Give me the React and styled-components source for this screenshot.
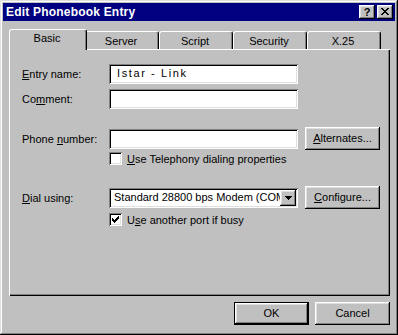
import styled, { createGlobalStyle } from 'styled-components'

const GlobalStyle = createGlobalStyle`
  html, body {
    margin: 0;
    padding: 0;
    background: #c0c0c0;
  }
  * { box-sizing: border-box; }
`

const raised = `
  box-shadow: inset -1px -1px #000, inset 1px 1px #fff, inset -2px -2px #808080, inset 2px 2px #dfdfdf;
`
const sunken = `
  box-shadow: inset 1px 1px #808080, inset -1px -1px #fff, inset 2px 2px #000, inset -2px -2px #dfdfdf;
`

const Window = styled.div`
  width: 398px;
  height: 335px;
  background: #c0c0c0;
  padding: 3px;
  font-family: "Liberation Sans", Arial, sans-serif;
  font-size: 11px;
  color: #000;
  box-shadow: inset -1px -1px #000, inset 1px 1px #dfdfdf, inset -2px -2px #808080, inset 2px 2px #fff;
  display: flex;
  flex-direction: column;
`

const TitleBar = styled.div`
  height: 18px;
  background: #000080;
  display: flex;
  align-items: center;
  padding: 0 2px 0 3px;
`

const Title = styled.div`
  flex: 1;
  color: #fff;
  font-weight: bold;
  font-size: 12px;
  letter-spacing: 0.2px;
`

const CaptionButton = styled.div`
  width: 16px;
  height: 14px;
  background: #c0c0c0;
  ${raised}
  display: flex;
  align-items: center;
  justify-content: center;
  margin-left: ${p => p.$gap || 0}px;
  font-weight: bold;
  font-size: 11px;
  line-height: 14px;
  padding-bottom: 1px;
`

const Body = styled.div`
  padding: 8px 0 0 6px;
`

const TabRow = styled.div`
  display: flex;
  align-items: flex-end;
  height: 20px;
  padding-left: 2px;
`

const Tab = styled.div`
  width: ${p => (p.$active ? 78 : 74)}px;
  height: ${p => (p.$active ? 21 : 18)}px;
  margin: ${p => (p.$active ? '0 -2px -1px -2px' : '0')};
  position: relative;
  z-index: ${p => (p.$active ? 2 : 1)};
  background: #c0c0c0;
  border-top: 1px solid #fff;
  border-left: 1px solid #fff;
  border-right: 1px solid #000;
  border-radius: 3px 3px 0 0;
  box-shadow: inset -1px 0 #808080;
  display: flex;
  justify-content: center;
  padding-top: ${p => (p.$active ? 2 : 3)}px;
  padding-right: 2px;
`

const Panel = styled.div`
  width: 381px;
  height: 247px;
  background: #c0c0c0;
  box-shadow: inset 1px 1px #fff, inset -1px -1px #000, inset -2px -2px #808080;
  padding: 15px 0 0 13px;
  display: flex;
  flex-direction: column;
`

const Row = styled.div`
  display: flex;
  align-items: center;
  height: ${p => p.$h || 20}px;
  margin-top: ${p => p.$mt || 0}px;
`

const Label = styled.div`
  width: 87px;
  flex: none;
`

const Field = styled.div`
  width: 189px;
  height: 20px;
  background: #fff;
  ${sunken}
  padding: 3px 0 0 8px;
  letter-spacing: ${p => p.$wide ? '1.6px' : '0'};
  white-space: nowrap;
  overflow: hidden;
`

const Select = styled.div`
  width: 189px;
  height: 20px;
  background: #fff;
  ${sunken}
  padding: 2px;
  display: flex;
`

const SelectText = styled.div`
  flex: 1;
  padding: 1px 0 0 3px;
  white-space: nowrap;
  overflow: hidden;
`

const DropButton = styled.div`
  width: 16px;
  height: 16px;
  flex: none;
  background: #c0c0c0;
  ${raised}
  display: flex;
  align-items: center;
  justify-content: center;
`

const Button = styled.div`
  width: 75px;
  height: 23px;
  background: #c0c0c0;
  ${p => p.$default
    ? 'border: 1px solid #000; box-shadow: inset -1px -1px #000, inset 1px 1px #fff, inset -2px -2px #808080, inset 2px 2px #dfdfdf;'
    : raised}
  display: flex;
  align-items: center;
  justify-content: center;
  margin-left: ${p => p.$ml || 0}px;
  padding-bottom: 1px;
`

const CheckRow = styled.div`
  display: flex;
  align-items: center;
  padding-left: 87px;
  height: 13px;
  margin-top: ${p => p.$mt || 0}px;
`

const CheckBox = styled.div`
  width: 13px;
  height: 13px;
  background: #fff;
  ${sunken}
  margin-right: 5px;
  padding: 3px;
`

const Footer = styled.div`
  display: flex;
  justify-content: flex-end;
  width: 381px;
  margin-top: 6px;
`

const U = styled.span`
  text-decoration: underline;
  text-underline-offset: 1px;
`

const CheckMark = () => (
  <svg width="7" height="7" viewBox="0 0 7 7" shapeRendering="crispEdges" style={{ display: 'block' }}>
    <rect x="6" y="0" width="1" height="1" />
    <rect x="5" y="1" width="2" height="1" />
    <rect x="0" y="2" width="1" height="1" />
    <rect x="4" y="2" width="3" height="1" />
    <rect x="0" y="3" width="2" height="1" />
    <rect x="3" y="3" width="3" height="1" />
    <rect x="0" y="4" width="5" height="1" />
    <rect x="1" y="5" width="3" height="1" />
    <rect x="2" y="6" width="1" height="1" />
  </svg>
)

const CloseIcon = () => (
  <svg width="8" height="7" viewBox="0 0 8 7" shapeRendering="crispEdges" style={{ display: 'block' }}>
    <rect x="0" y="0" width="2" height="1" /><rect x="6" y="0" width="2" height="1" />
    <rect x="1" y="1" width="2" height="1" /><rect x="5" y="1" width="2" height="1" />
    <rect x="2" y="2" width="4" height="1" />
    <rect x="3" y="3" width="2" height="1" />
    <rect x="2" y="4" width="4" height="1" />
    <rect x="1" y="5" width="2" height="1" /><rect x="5" y="5" width="2" height="1" />
    <rect x="0" y="6" width="2" height="1" /><rect x="6" y="6" width="2" height="1" />
  </svg>
)

const Arrow = () => (
  <svg width="7" height="4" viewBox="0 0 7 4" shapeRendering="crispEdges" style={{ display: 'block' }}>
    <rect x="0" y="0" width="7" height="1" />
    <rect x="1" y="1" width="5" height="1" />
    <rect x="2" y="2" width="3" height="1" />
    <rect x="3" y="3" width="1" height="1" />
  </svg>
)

const tabs = ['Basic', 'Server', 'Script', 'Security', 'X.25']

export default function App() {
  return (
    <>
      <GlobalStyle />
      <Window>
        <TitleBar>
          <Title>Edit Phonebook Entry</Title>
          <CaptionButton>?</CaptionButton>
          <CaptionButton $gap={2}><CloseIcon /></CaptionButton>
        </TitleBar>
        <Body>
          <TabRow>
            {tabs.map((t, i) => (
              <Tab key={t} $active={i === 0}>{t}</Tab>
            ))}
          </TabRow>
          <Panel>
            <Row>
              <Label><U>E</U>ntry name:</Label>
              <Field $wide>Istar - Link</Field>
            </Row>
            <Row $mt={5}>
              <Label>Co<U>m</U>ment:</Label>
              <Field />
            </Row>
            <Row $mt={18} $h={23}>
              <Label>Phone <U>n</U>umber:</Label>
              <Field />
              <Button $ml={7}><span><U>A</U>lternates...</span></Button>
            </Row>
            <CheckRow $mt={2}>
              <CheckBox />
              <span><U>U</U>se Telephony dialing properties</span>
            </CheckRow>
            <Row $mt={21} $h={23}>
              <Label><U>D</U>ial using:</Label>
              <Select>
                <SelectText>Standard 28800 bps Modem (COM2)</SelectText>
                <DropButton><Arrow /></DropButton>
              </Select>
              <Button $ml={7}><span><U>C</U>onfigure...</span></Button>
            </Row>
            <CheckRow $mt={4}>
              <CheckBox><CheckMark /></CheckBox>
              <span>U<U>s</U>e another port if busy</span>
            </CheckRow>
          </Panel>
          <Footer>
            <Button $default>OK</Button>
            <Button $ml={6}>Cancel</Button>
          </Footer>
        </Body>
      </Window>
    </>
  )
}
